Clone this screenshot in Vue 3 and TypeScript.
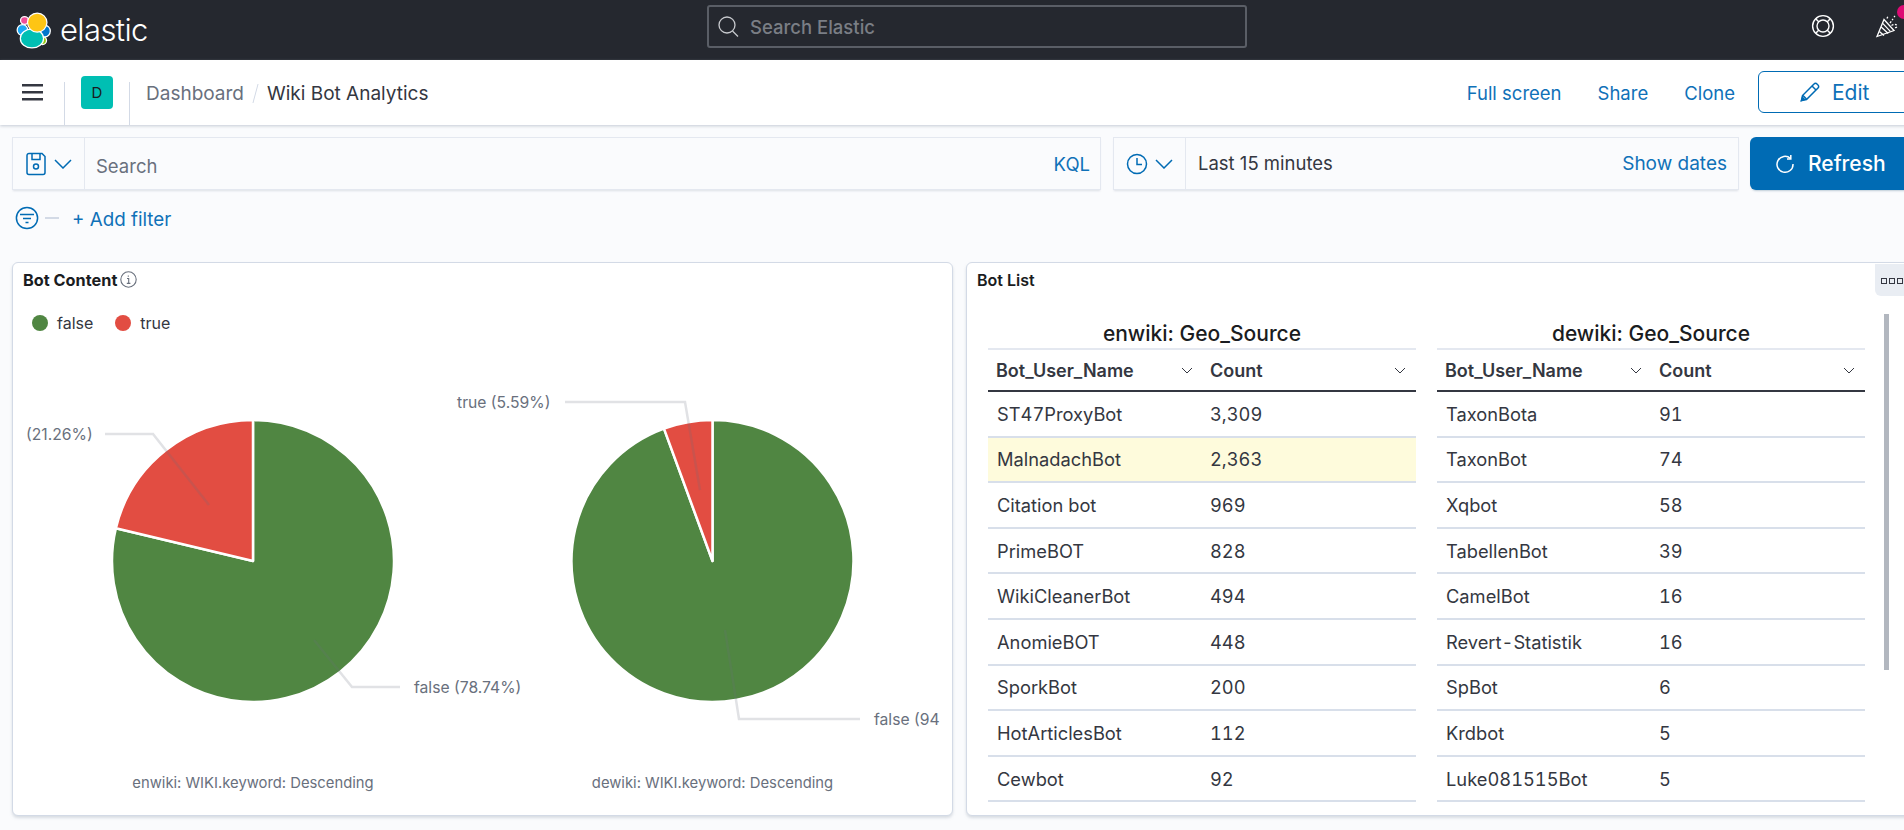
<script setup lang="ts">
interface Row { name: string; count: string; hl?: boolean }
interface Table { title: string; rows: Row[] }

const tables: Table[] = [
  {
    title: 'enwiki: Geo_Source',
    rows: [
      { name: 'ST47ProxyBot', count: '3,309' },
      { name: 'MalnadachBot', count: '2,363', hl: true },
      { name: 'Citation bot', count: '969' },
      { name: 'PrimeBOT', count: '828' },
      { name: 'WikiCleanerBot', count: '494' },
      { name: 'AnomieBOT', count: '448' },
      { name: 'SporkBot', count: '200' },
      { name: 'HotArticlesBot', count: '112' },
      { name: 'Cewbot', count: '92' },
    ],
  },
  {
    title: 'dewiki: Geo_Source',
    rows: [
      { name: 'TaxonBota', count: '91' },
      { name: 'TaxonBot', count: '74' },
      { name: 'Xqbot', count: '58' },
      { name: 'TabellenBot', count: '39' },
      { name: 'CamelBot', count: '16' },
      { name: 'Revert-Statistik', count: '16' },
      { name: 'SpBot', count: '6' },
      { name: 'Krdbot', count: '5' },
      { name: 'Luke081515Bot', count: '5' },
    ],
  },
]

interface Pie {
  cx: number
  cy: number
  truePct: number
  caption: string
  lines: string[]
  labels: { x: number; y: number; text: string }[]
}

const R = 141
const pies: Pie[] = [
  {
    cx: 253,
    cy: 561,
    truePct: 21.26,
    caption: 'enwiki: WIKI.keyword: Descending',
    lines: ['105,434 153,434 209,505', '314,640 352,687 400,687'],
    labels: [
      { x: 26, y: 434, text: '(21.26%)' },
      { x: 414, y: 687, text: 'false (78.74%)' },
    ],
  },
  {
    cx: 712.5,
    cy: 561,
    truePct: 5.59,
    caption: 'dewiki: WIKI.keyword: Descending',
    lines: ['565,402 685,402 700,490', '725,630 739,719 860,719'],
    labels: [
      { x: 457, y: 402, text: 'true (5.59%)' },
      { x: 874, y: 719, text: 'false (94' },
    ],
  },
]

function slices(p: Pie): { green: string; red: string } {
  const a = (p.truePct / 100) * Math.PI * 2
  const x = (p.cx - Math.sin(a) * R).toFixed(2)
  const y = (p.cy - Math.cos(a) * R).toFixed(2)
  const top = `${p.cx} ${p.cy - R}`
  const large = a > Math.PI ? 1 : 0
  return {
    red: `M${p.cx} ${p.cy}L${x} ${y}A${R} ${R} 0 ${large} 1 ${top}Z`,
    green: `M${p.cx} ${p.cy}L${top}A${R} ${R} 0 ${large ? 0 : 1} 1 ${x} ${y}Z`,
  }
}
</script>

<template>
  <div class="page">
    <header class="top">
      <div class="brand">
        <svg class="logo" width="38" height="38" viewBox="14 8 36 36">
          <g stroke="#fff" stroke-width="1.2">
            <ellipse cx="24" cy="17" rx="3.8" ry="3.6" fill="#f04e98" />
            <ellipse cx="22" cy="26" rx="5" ry="5.2" fill="#1ba9f5" />
            <ellipse cx="41" cy="36" rx="3.8" ry="3.8" fill="#93c90e" />
            <ellipse cx="43" cy="27" rx="5.4" ry="5.6" fill="#0077cc" />
            <ellipse cx="31" cy="34" rx="11" ry="9" fill="#00bfb3" />
            <ellipse cx="36" cy="19" rx="9.2" ry="9" fill="#fec514" />
          </g>
        </svg>
        <span class="wordmark">elastic</span>
      </div>
      <div class="global-search">
        <svg width="24" height="24" viewBox="0 0 24 24" fill="none" stroke="#c8cace" stroke-width="1.3">
          <circle cx="10" cy="10" r="8" />
          <path d="M15.5 16l5.5 5.5" />
        </svg>
        <span>Search Elastic</span>
      </div>
      <div class="top-icons">
        <button class="top-icon" type="button" aria-label="Help">
          <svg width="24" height="24" viewBox="0 0 24 24" fill="none" stroke="#fff" stroke-width="1.4">
            <circle cx="12" cy="12" r="10.4" />
            <circle cx="12" cy="12" r="6" />
            <path d="M4.7 4.7l3 3M19.3 4.7l-3 3M4.7 19.3l3-3M19.3 19.3l-3-3" />
          </svg>
        </button>
        <button class="top-icon" type="button" aria-label="News">
          <svg width="24" height="24" viewBox="0 0 24 24" fill="none" stroke="#fff" stroke-width="1.3">
            <path d="M2 22.5L9 5.5 19 16.5z" />
            <path d="M6.2 13l7 6.4M4.4 17.5l4.6 4M7.7 9.4l7.6 8" />
            <path d="M12 4.5l1-2.5M15 9l3-4M19 3l1-1M16.5 11.5c2-1 4-1.500 5-.5 1 1.500 0 3-1.500 2.500" stroke-dasharray="2 1.500" />
          </svg>
          <span class="badge"></span>
        </button>
      </div>
    </header>

    <nav class="nav">
      <button class="burger" type="button" aria-label="Menu">
        <svg width="22" height="18" viewBox="0 0 22 18" fill="#343741">
          <rect y="1" width="21" height="2.500" />
          <rect y="8" width="21" height="2.500" />
          <rect y="15" width="21" height="2.500" />
        </svg>
      </button>
      <div class="app-tile-cell"><span class="tile">D</span></div>
      <div class="crumbs">
        <span class="crumb-link">Dashboard</span>
        <span class="crumb-sep"></span>
        <span class="crumb-cur">Wiki Bot Analytics</span>
      </div>
      <div class="nav-actions">
        <a class="link">Full screen</a>
        <a class="link">Share</a>
        <a class="link clone">Clone</a>
        <button class="edit" type="button">
          <svg width="22" height="22" viewBox="0 0 22 22" fill="none" stroke="#006bb4" stroke-width="1.500">
            <path d="M2.500 19.500l1-5L15 3a2 2 0 0 1 3 0l1 1a2 2 0 0 1 0 3L7.500 18.500z" />
            <path d="M13 5l4 4M4 14.500l3.500 3.500" />
            <path d="M2.500 19.500l1-3 2 2z" fill="#006bb4" />
          </svg>
          <span>Edit</span>
        </button>
      </div>
    </nav>

    <section class="query-row">
      <div class="bar query">
        <div class="prepend">
          <svg width="22" height="26" viewBox="0 0 22 26" fill="none" stroke="#006bb4" stroke-width="1.500">
            <path d="M2 4.500a2 2 0 0 1 2-2h13l3 3v16a2 2 0 0 1-2 2H4a2 2 0 0 1-2-2z" />
            <path d="M7 2.500v6h8v-6" />
            <circle cx="11" cy="15.500" r="2.500" />
          </svg>
          <svg class="chev" width="18" height="10" viewBox="0 0 18 10" fill="none" stroke="#006bb4" stroke-width="1.500">
            <path d="M1 1l8 8 8-8" />
          </svg>
        </div>
        <span class="placeholder">Search</span>
        <a class="link kql">KQL</a>
      </div>
      <div class="bar dates">
        <div class="prepend">
          <svg width="22" height="22" viewBox="0 0 22 22" fill="none" stroke="#006bb4" stroke-width="1.500">
            <circle cx="11" cy="11" r="9.500" />
            <path d="M11 5v6.500H16" />
          </svg>
          <svg class="chev" width="18" height="10" viewBox="0 0 18 10" fill="none" stroke="#006bb4" stroke-width="1.500">
            <path d="M1 1l8 8 8-8" />
          </svg>
        </div>
        <span class="range">Last 15 minutes</span>
        <a class="link show-dates">Show dates</a>
      </div>
      <button class="refresh" type="button">
        <svg width="20" height="20" viewBox="0 0 20 20" fill="none" stroke="#fff" stroke-width="1.500">
          <path d="M15.500 4.500A8 8 0 1 0 18 10" />
          <path d="M15.800 1v4H12" />
        </svg>
        <span>Refresh</span>
      </button>
    </section>

    <section class="filter-row">
      <svg width="24" height="24" viewBox="0 0 24 24" fill="none" stroke="#006bb4" stroke-width="1.500">
        <circle cx="12" cy="12" r="10.600" />
        <path d="M5 8.500h14M8 12.500h8M10.500 16.500h3" />
      </svg>
      <span class="dash"></span>
      <a class="link add">+ Add filter</a>
    </section>

    <main class="panels">
      <article class="panel">
        <div class="panel-head">
          <h2>Bot Content</h2>
          <svg class="info" width="17" height="17" viewBox="0 0 17 17" fill="none" stroke="#69707d" stroke-width="1.100">
            <circle cx="8.500" cy="8.500" r="7.700" />
            <path d="M7 7.500h1.700v4.800M6.800 12.400h3.600M8.300 4.500v1.300" />
          </svg>
        </div>
        <div class="legend">
          <span class="dot green"></span><span class="legend-label first">false</span>
          <span class="dot red"></span><span class="legend-label">true</span>
        </div>
        <svg class="chart" width="939" height="473" viewBox="13 342 939 473">
          <g v-for="p in pies" :key="p.caption">
            <path :d="slices(p).green" fill="#508642" stroke="#fff" stroke-width="2.500" stroke-linejoin="round" />
            <path :d="slices(p).red" fill="#e24d42" stroke="#fff" stroke-width="2.500" stroke-linejoin="round" />
            <polyline v-for="l in p.lines" :key="l" :points="l" fill="none" stroke="#69707d" stroke-opacity=".2" stroke-width="2.500" />
            <text v-for="t in p.labels" :key="t.text" class="pie-label" :x="t.x" :y="t.y" dominant-baseline="central">{{ t.text }}</text>
            <text class="pie-caption" :x="p.cx" y="783" text-anchor="middle" dominant-baseline="central">{{ p.caption }}</text>
          </g>
        </svg>
      </article>

      <article class="panel list">
        <div class="panel-head">
          <h2>Bot List</h2>
        </div>
        <button class="panel-menu" type="button" aria-label="Panel options">
          <svg width="22" height="6" viewBox="0 0 22 6" fill="none" stroke="#343741" stroke-width="1">
            <rect x=".5" y=".5" width="5" height="5" />
            <rect x="8.500" y=".5" width="5" height="5" />
            <rect x="16.500" y=".5" width="5" height="5" />
          </svg>
        </button>
        <div class="tables">
          <div v-for="t in tables" :key="t.title" class="tbl">
            <div class="tbl-title">{{ t.title }}</div>
            <div class="tr th">
              <div class="cell">
                <span>Bot_User_Name</span>
                <svg width="12" height="7" viewBox="0 0 12 7" fill="none" stroke="#343741"><path d="M1 1l5 5 5-5" /></svg>
              </div>
              <div class="cell">
                <span>Count</span>
                <svg width="12" height="7" viewBox="0 0 12 7" fill="none" stroke="#343741"><path d="M1 1l5 5 5-5" /></svg>
              </div>
            </div>
            <div v-for="r in t.rows" :key="r.name" class="tr td" :class="{ hl: r.hl }">
              <div class="cell">{{ r.name }}</div>
              <div class="cell">{{ r.count }}</div>
            </div>
          </div>
        </div>
        <span class="scrollbar"></span>
      </article>
    </main>
  </div>
</template>

<style scoped>
.page {
  width: 1954px;
  height: 830px;
  display: flex;
  flex-direction: column;
  background: #fafbfd;
  font-family: Inter, "Noto Sans", sans-serif;
  color: #343741;
  overflow: hidden;
}
button {
  font: inherit;
  background: none;
  border: 0;
  padding: 0;
}
.link {
  color: #0f71b8;
  font-size: 18.5px;
}

/* top bar */
.top {
  height: 60px;
  flex: none;
  background: #25282f;
  display: grid;
  grid-template-columns: 1fr 540px 1fr;
  align-items: center;
}
.brand {
  display: flex;
  align-items: center;
  padding-left: 14px;
  height: 60px;
}
.wordmark {
  margin-left: 8px;
  color: #fff;
  font-size: 31px;
  font-weight: 300;
  letter-spacing: -0.6px;
  line-height: 50px;
}
.global-search {
  height: 43px;
  box-sizing: border-box;
  margin-top: -7px;
  border: 2px solid #5a5e66;
  border-radius: 3px;
  display: flex;
  align-items: center;
  padding-left: 8px;
  gap: 9px;
  color: #7a7e85;
  font-size: 18.5px;
  font-weight: 500;
}
.top-icons {
  display: flex;
  justify-content: flex-end;
  padding-right: 35px;
}
.top-icon {
  position: relative;
  width: 64px;
  height: 60px;
  display: flex;
  align-items: center;
  justify-content: center;
  margin-top: -8px;
}
.badge {
  position: absolute;
  left: 42px;
  top: 9px;
  width: 14px;
  height: 14px;
  border-radius: 50%;
  background: #dd0a73;
}

/* nav */
.nav {
  height: 65px;
  flex: none;
  background: #fff;
  display: flex;
  align-items: stretch;
  box-shadow: 0 1px 3px rgba(152, 162, 179, 0.55);
  position: relative;
}
.burger {
  width: 64px;
  box-sizing: border-box;
  padding: 0 0 2px 22px;
  text-align: left;
  display: flex;
  align-items: center;
  position: relative;
}
.burger::after,
.app-tile-cell::after {
  content: "";
  position: absolute;
  right: -1px;
  bottom: 0;
  width: 1px;
  height: 43px;
  background: #d3dae6;
}
.app-tile-cell {
  width: 65px;
  box-sizing: border-box;
  padding: 16px 0 0 17px;
  position: relative;
}
.tile {
  width: 32px;
  height: 33px;
  border-radius: 4px;
  background: #00bfb3;
  display: flex;
  align-items: center;
  justify-content: center;
  font-size: 15px;
  color: #1a1c21;
}
.crumbs {
  flex: 1;
  display: flex;
  align-items: center;
  padding: 0 0 0 17px;
  margin-top: 1px;
  font-size: 19px;
}
.crumb-link {
  color: #69707d;
}
.crumb-sep {
  width: 1px;
  height: 19px;
  margin: 0 11px;
  background: #d3dae6;
  transform: skewX(-15deg);
}
.crumb-cur {
  color: #343741;
}
.nav-actions {
  display: flex;
  align-items: center;
  padding: 0 12px 0 0;
}
.nav-actions .link {
  margin-right: 36px;
}
.nav-actions .clone {
  margin-right: 23px;
}
.edit {
  width: 184px;
  height: 42px;
  margin-top: -1px;
  box-sizing: border-box;
  border: 1.5px solid #006bb4;
  border-radius: 6px;
  color: #0f71b8;
  font-size: 21px;
  display: flex;
  align-items: center;
  gap: 11px;
  padding-left: 40px;
}

/* query */
.query-row {
  margin-top: 12px;
  padding: 0 12px;
  display: flex;
  flex: none;
  height: 53px;
}
.bar {
  box-sizing: border-box;
  height: 53px;
  display: flex;
  align-items: center;
  background: #fafbfd;
  border: 1px solid #e4e8f0;
  box-shadow: 0 2px 2px -1px rgba(152, 162, 179, 0.3);
  font-size: 18.5px;
}
.query {
  width: 1089px;
  margin-right: 12px;
}
.dates {
  width: 626px;
  margin-right: 11px;
}
.prepend {
  width: 72px;
  height: 100%;
  flex: none;
  box-sizing: border-box;
  border-right: 1px solid #e4e8f0;
  display: flex;
  align-items: center;
  padding-left: 12px;
  gap: 7px;
}
.placeholder {
  flex: 1;
  margin-left: 11px;
  padding-top: 5px;
  color: #69707d;
}
.kql {
  margin-right: 10px;
}
.range {
  flex: 1;
  margin-left: 12px;
  margin-bottom: 1px;
}
.show-dates {
  margin-right: 11px;
  margin-bottom: 1px;
  font-size: 19px;
}
.refresh {
  width: 192px;
  height: 53px;
  border-radius: 6px;
  background: #006bb4;
  color: #fff;
  font-size: 21px;
  font-weight: 500;
  display: flex;
  align-items: center;
  gap: 13px;
  padding-left: 25px;
  box-sizing: border-box;
  box-shadow: 0 2px 2px -1px rgba(54, 97, 126, 0.3);
}

/* filter */
.filter-row {
  height: 72px;
  flex: none;
  box-sizing: border-box;
  display: flex;
  align-items: flex-start;
  padding: 16px 0 0 15px;
}
.dash {
  width: 14px;
  height: 1.500px;
  margin: 11px 0 0 6px;
  background: #d3dae6;
}
.add {
  margin-left: 13px;
  line-height: 28px;
  font-size: 18.8px;
}

/* panels */
.panels {
  display: grid;
  grid-template-columns: 941px 976px;
  gap: 13px;
  padding: 0 12px;
  height: 554px;
  flex: none;
}
.panel {
  position: relative;
  box-sizing: border-box;
  background: #fff;
  border: 1px solid #d3dae6;
  border-radius: 6px;
  box-shadow: 0 2px 3px rgba(152, 162, 179, 0.35);
  overflow: hidden;
}
.panel-head {
  height: 33px;
  display: flex;
  align-items: center;
  padding-left: 10px;
  gap: 3px;
}
.panel-head h2 {
  margin: 0;
  font-size: 16.3px;
  font-weight: 700;
  color: #1a1c21;
}
.list .panel-head h2 {
  font-size: 16px;
  font-weight: 600;
}
.legend {
  height: 46px;
  box-sizing: border-box;
  display: flex;
  align-items: center;
  padding: 7px 0 0 19px;
  font-size: 16px;
}
.dot {
  width: 16px;
  height: 16px;
  border-radius: 50%;
  margin-right: 9px;
}
.green {
  background: #508642;
}
.red {
  background: #e24d42;
}
.first {
  margin-right: 22px;
}
.chart {
  display: block;
}
.pie-label {
  font-size: 15.7px;
  fill: #69707d;
}
.pie-caption {
  font-size: 14.8px;
  fill: #69707d;
}

/* tables */
.panel-menu {
  position: absolute;
  top: 1px;
  left: 908px;
  width: 60px;
  height: 32px;
  background: #e9edf3;
  border-radius: 0 0 0 6px;
  padding: 2px 0 0 6px;
  display: flex;
  align-items: center;
}
.tables {
  display: flex;
  gap: 21px;
  padding: 20px 0 0 21px;
}
.tbl {
  width: 428px;
}
.tbl-title {
  height: 32px;
  line-height: 35px;
  text-align: center;
  font-size: 21px;
  font-weight: 500;
  color: #1a1c21;
  border-bottom: 2px solid #e4e8f0;
  box-sizing: content-box;
}
.tr {
  display: grid;
  grid-template-columns: 213px 215px;
  font-size: 18.3px;
  font-variant-numeric: tabular-nums;
}
.th {
  height: 40px;
  border-bottom: 2px solid #343741;
  font-size: 18px;
  font-weight: 600;
}
.th .cell {
  display: flex;
  align-items: center;
  justify-content: space-between;
  padding: 0 8px 0 8px;
}
.th .cell + .cell {
  padding-left: 9px;
  padding-right: 10px;
}
.td {
  height: 45.6px;
  box-sizing: border-box;
  border-bottom: 2px solid #d8dfea;
}
.td .cell {
  display: flex;
  align-items: center;
  padding-left: 9px;
}
.hl {
  background: #fefbdc;
}
.scrollbar {
  position: absolute;
  left: 917px;
  top: 51px;
  width: 5px;
  height: 356px;
  background: #b2b7bf;
}
</style>

<style>
html,
body {
  margin: 0;
  overflow: hidden;
  background: #fafbfd;
}
</style>
